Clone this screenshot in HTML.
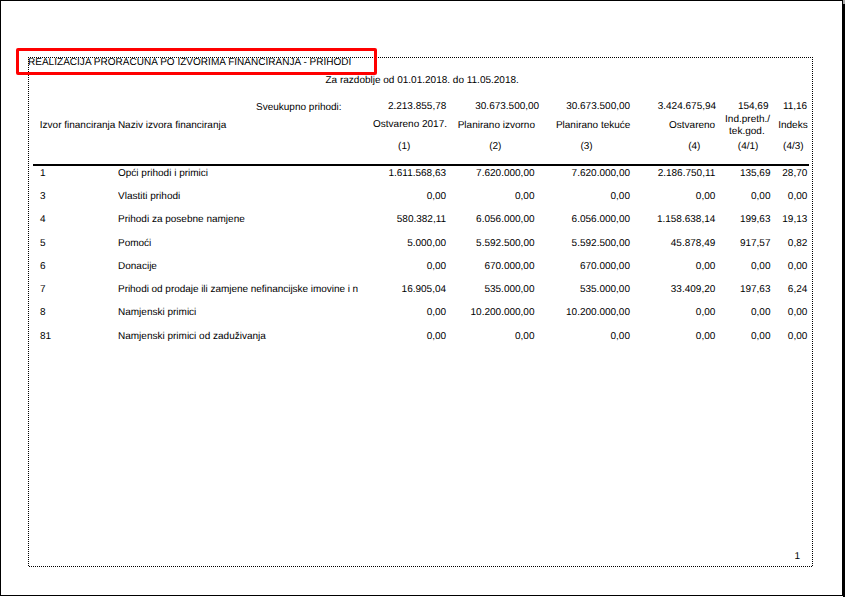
<!DOCTYPE html>
<html lang="hr"><head><meta charset="utf-8"><title>Realizacija proračuna po izvorima financiranja - prihodi</title>
<style>
html,body{margin:0;padding:0;background:#fff;}
body{width:845px;height:597px;position:relative;overflow:hidden;font-family:"Liberation Sans",Arial,sans-serif;font-size:10px;line-height:12px;color:#000;text-rendering:geometricPrecision;}
.page{position:absolute;left:0;top:0;width:841px;height:594px;border-left:1px solid #000;border-top:1px solid #000;box-sizing:content-box;}
.bb{position:absolute;left:0;top:595px;width:845px;height:1px;background:#000;}
.rb{position:absolute;left:842px;top:0;width:3px;height:597px;background:#000;}
.gc{position:absolute;left:843px;top:0;width:2px;height:4px;background:#a9a9a9;}
.wp{position:absolute;left:842px;top:596px;width:1px;height:1px;background:#fff;}
.dt{position:absolute;left:28px;top:57px;width:785px;height:1px;background:repeating-linear-gradient(90deg,#000 0,#000 1px,transparent 1px,transparent 2px);}
.db{position:absolute;left:29px;top:566px;width:783px;height:1px;background:repeating-linear-gradient(90deg,#000 0,#000 1px,transparent 1px,transparent 2px);}
.dl{position:absolute;left:28px;top:57px;width:1px;height:509px;background:repeating-linear-gradient(180deg,#000 0,#000 1px,transparent 1px,transparent 2px);}
.dr{position:absolute;left:812px;top:57px;width:1px;height:509px;background:repeating-linear-gradient(180deg,#000 0,#000 1px,transparent 1px,transparent 2px);}
.hl{position:absolute;left:33px;top:164px;width:776px;height:2px;background:#000;}
.red{position:absolute;left:16px;top:48px;width:355px;height:21px;border:3px solid #ff0000;border-radius:2px;}
.t{position:absolute;white-space:nowrap;height:12px;}
.r{text-align:right;}
.c{text-align:center;}
.title{position:absolute;left:28px;top:58px;width:340px;height:12px;overflow:hidden;white-space:nowrap;}
.title span{position:absolute;left:0;top:-1px;letter-spacing:0.02px;}
.clip{overflow:hidden;}
</style></head><body>
<div class="page"></div><div class="bb"></div><div class="rb"></div><div class="gc"></div><div class="wp"></div>
<div class="dt"></div><div class="db"></div><div class="dl"></div><div class="dr"></div>
<div class="title"><span>REALIZACIJA PRORAČUNA PO IZVORIMA FINANCIRANJA - PRIHODI</span></div>
<div class="red"></div>
<div class="hl"></div>

<div class="t" style="left:325.5px;top:75px;">Za razdoblje od 01.01.2018. do 11.05.2018.</div>
<div class="t" style="left:256px;top:102px;">Sveukupno prihodi:</div>
<div class="t r" style="left:246.3px;width:200px;top:101px;">2.213.855,78</div>
<div class="t r" style="left:339.2px;width:200px;top:101px;">30.673.500,00</div>
<div class="t r" style="left:430.1px;width:200px;top:101px;">30.673.500,00</div>
<div class="t r" style="left:516.1px;width:200px;top:101px;">3.424.675,94</div>
<div class="t r" style="left:568.5px;width:200px;top:101px;">154,69</div>
<div class="t r" style="left:607.2px;width:200px;top:101px;">11,16</div>
<div class="t" style="left:39.8px;top:120px;">Izvor financiranja</div>
<div class="t" style="left:117.9px;top:120px;">Naziv izvora financiranja</div>
<div class="t r" style="left:247px;width:200px;top:119px;">Ostvareno 2017.</div>
<div class="t" style="left:457.7px;top:120px;">Planirano izvorno</div>
<div class="t" style="left:555.9px;top:120px;">Planirano tekuće</div>
<div class="t r" style="left:515.2px;width:200px;top:120px;">Ostvareno</div>
<div class="t r" style="left:607.7px;width:200px;top:120px;">Indeks</div>
<div class="t c" style="left:647.6px;width:200px;top:114px;">Ind.preth./</div>
<div class="t c" style="left:646.9px;width:200px;top:126px;">tek.god.</div>
<div class="t c" style="left:304.2px;width:200px;top:141px;">(1)</div>
<div class="t c" style="left:395.3px;width:200px;top:141px;">(2)</div>
<div class="t c" style="left:486.5px;width:200px;top:141px;">(3)</div>
<div class="t c" style="left:594.3px;width:200px;top:141px;">(4)</div>
<div class="t c" style="left:648.1px;width:200px;top:141px;">(4/1)</div>
<div class="t c" style="left:693.4px;width:200px;top:141px;">(4/3)</div>
<div class="t" style="left:40px;top:168px;">1</div>
<div class="t clip" style="left:118px;top:168px;width:240px;">Opći prihodi i primici</div>
<div class="t r" style="left:246.1px;width:200px;top:168px;">1.611.568,63</div>
<div class="t r" style="left:334.5px;width:200px;top:168px;">7.620.000,00</div>
<div class="t r" style="left:430px;width:200px;top:168px;">7.620.000,00</div>
<div class="t r" style="left:515.3px;width:200px;top:168px;">2.186.750,11</div>
<div class="t r" style="left:570.5px;width:200px;top:168px;">135,69</div>
<div class="t r" style="left:607.3px;width:200px;top:168px;">28,70</div>
<div class="t" style="left:40px;top:191px;">3</div>
<div class="t clip" style="left:118px;top:191px;width:240px;">Vlastiti prihodi</div>
<div class="t r" style="left:246.1px;width:200px;top:191px;">0,00</div>
<div class="t r" style="left:334.5px;width:200px;top:191px;">0,00</div>
<div class="t r" style="left:430px;width:200px;top:191px;">0,00</div>
<div class="t r" style="left:515.3px;width:200px;top:191px;">0,00</div>
<div class="t r" style="left:570.5px;width:200px;top:191px;">0,00</div>
<div class="t r" style="left:607.3px;width:200px;top:191px;">0,00</div>
<div class="t" style="left:40px;top:214px;">4</div>
<div class="t clip" style="left:118px;top:214px;width:240px;">Prihodi za posebne namjene</div>
<div class="t r" style="left:246.1px;width:200px;top:214px;">580.382,11</div>
<div class="t r" style="left:334.5px;width:200px;top:214px;">6.056.000,00</div>
<div class="t r" style="left:430px;width:200px;top:214px;">6.056.000,00</div>
<div class="t r" style="left:515.3px;width:200px;top:214px;">1.158.638,14</div>
<div class="t r" style="left:570.5px;width:200px;top:214px;">199,63</div>
<div class="t r" style="left:607.3px;width:200px;top:214px;">19,13</div>
<div class="t" style="left:40px;top:238px;">5</div>
<div class="t clip" style="left:118px;top:238px;width:240px;">Pomoći</div>
<div class="t r" style="left:246.1px;width:200px;top:238px;">5.000,00</div>
<div class="t r" style="left:334.5px;width:200px;top:238px;">5.592.500,00</div>
<div class="t r" style="left:430px;width:200px;top:238px;">5.592.500,00</div>
<div class="t r" style="left:515.3px;width:200px;top:238px;">45.878,49</div>
<div class="t r" style="left:570.5px;width:200px;top:238px;">917,57</div>
<div class="t r" style="left:607.3px;width:200px;top:238px;">0,82</div>
<div class="t" style="left:40px;top:261px;">6</div>
<div class="t clip" style="left:118px;top:261px;width:240px;">Donacije</div>
<div class="t r" style="left:246.1px;width:200px;top:261px;">0,00</div>
<div class="t r" style="left:334.5px;width:200px;top:261px;">670.000,00</div>
<div class="t r" style="left:430px;width:200px;top:261px;">670.000,00</div>
<div class="t r" style="left:515.3px;width:200px;top:261px;">0,00</div>
<div class="t r" style="left:570.5px;width:200px;top:261px;">0,00</div>
<div class="t r" style="left:607.3px;width:200px;top:261px;">0,00</div>
<div class="t" style="left:40px;top:284px;">7</div>
<div class="t clip" style="left:118px;top:284px;width:240px;letter-spacing:-0.04px;">Prihodi od prodaje ili zamjene nefinancijske imovine i n</div>
<div class="t r" style="left:246.1px;width:200px;top:284px;">16.905,04</div>
<div class="t r" style="left:334.5px;width:200px;top:284px;">535.000,00</div>
<div class="t r" style="left:430px;width:200px;top:284px;">535.000,00</div>
<div class="t r" style="left:515.3px;width:200px;top:284px;">33.409,20</div>
<div class="t r" style="left:570.5px;width:200px;top:284px;">197,63</div>
<div class="t r" style="left:607.3px;width:200px;top:284px;">6,24</div>
<div class="t" style="left:40px;top:307px;">8</div>
<div class="t clip" style="left:118px;top:307px;width:240px;">Namjenski primici</div>
<div class="t r" style="left:246.1px;width:200px;top:307px;">0,00</div>
<div class="t r" style="left:334.5px;width:200px;top:307px;">10.200.000,00</div>
<div class="t r" style="left:430px;width:200px;top:307px;">10.200.000,00</div>
<div class="t r" style="left:515.3px;width:200px;top:307px;">0,00</div>
<div class="t r" style="left:570.5px;width:200px;top:307px;">0,00</div>
<div class="t r" style="left:607.3px;width:200px;top:307px;">0,00</div>
<div class="t" style="left:40px;top:331px;">81</div>
<div class="t clip" style="left:118px;top:331px;width:240px;">Namjenski primici od zaduživanja</div>
<div class="t r" style="left:246.1px;width:200px;top:331px;">0,00</div>
<div class="t r" style="left:334.5px;width:200px;top:331px;">0,00</div>
<div class="t r" style="left:430px;width:200px;top:331px;">0,00</div>
<div class="t r" style="left:515.3px;width:200px;top:331px;">0,00</div>
<div class="t r" style="left:570.5px;width:200px;top:331px;">0,00</div>
<div class="t r" style="left:607.3px;width:200px;top:331px;">0,00</div>
<div class="t" style="left:794.5px;top:551px;">1</div>
</body></html>
